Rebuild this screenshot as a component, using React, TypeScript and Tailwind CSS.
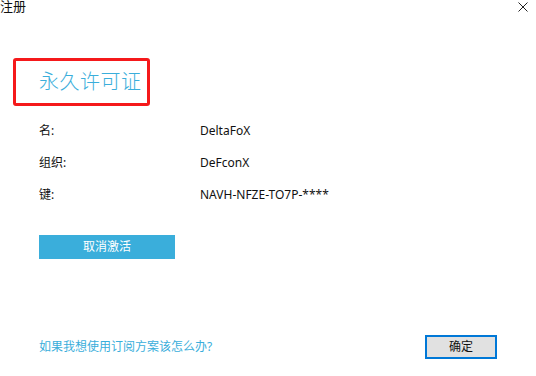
import React from 'react';

const rows: { label: string; value: string }[] = [
    { label: '名:', value: 'DeltaFoX' },
    { label: '组织:', value: 'DeFconX' },
    { label: '键:', value: 'NAVH-NFZE-TO7P-****' },
];

const App: React.FC = () => {
    return (
        <div
            className="w-[536px] h-[376px] bg-white overflow-hidden flex flex-col text-[#111]"
            style={{ fontFamily: '"Noto Sans", "Noto Sans CJK SC", sans-serif' }}
        >
            {/* title bar */}
            <div className="flex justify-between items-start h-[14px]">
                <span className="text-[13px] leading-[13px]">注册</span>
                <svg className="mr-[8px] mt-[2px]" width="10" height="10" viewBox="0 0 10 10">
                    <path d="M0.5 0.5 L9.5 9.5 M9.5 0.5 L0.5 9.5" stroke="#222" strokeWidth="1" />
                </svg>
            </div>

            {/* licence heading */}
            <div className="ml-[13px] mt-[44px] w-[137px] h-[48px] border-[3px] border-[#f5191b] rounded-[3px] flex items-center pl-[23px]">
                <span className="text-[20px] leading-none font-light text-[#3aaedb] tracking-[0.5px]">永久许可证</span>
            </div>

            {/* details */}
            <div className="ml-[39px] mt-[9px] flex flex-col text-[12px]">
                {rows.map((r) => (
                    <div key={r.label} className="grid grid-cols-[161px_1fr] h-[32px] items-center">
                        <span>{r.label}</span>
                        <span>{r.value}</span>
                    </div>
                ))}
            </div>

            <button className="ml-[39px] mt-[24px] w-[136px] h-[24px] bg-[#3aaedb] text-white text-[12px] flex items-center justify-center">
                取消激活
            </button>

            {/* footer */}
            <div className="mt-[76px] pl-[39px] pr-[39px] flex justify-between items-center">
                <span className="text-[12px] text-[#3aaedb]">如果我想使用订阅方案该怎么办?</span>
                <button className="w-[72px] h-[24px] border-2 border-[#0078d7] bg-[#e1e1e1] text-[12px] flex items-center justify-center">
                    确定
                </button>
            </div>
        </div>
    );
};

export default App;
